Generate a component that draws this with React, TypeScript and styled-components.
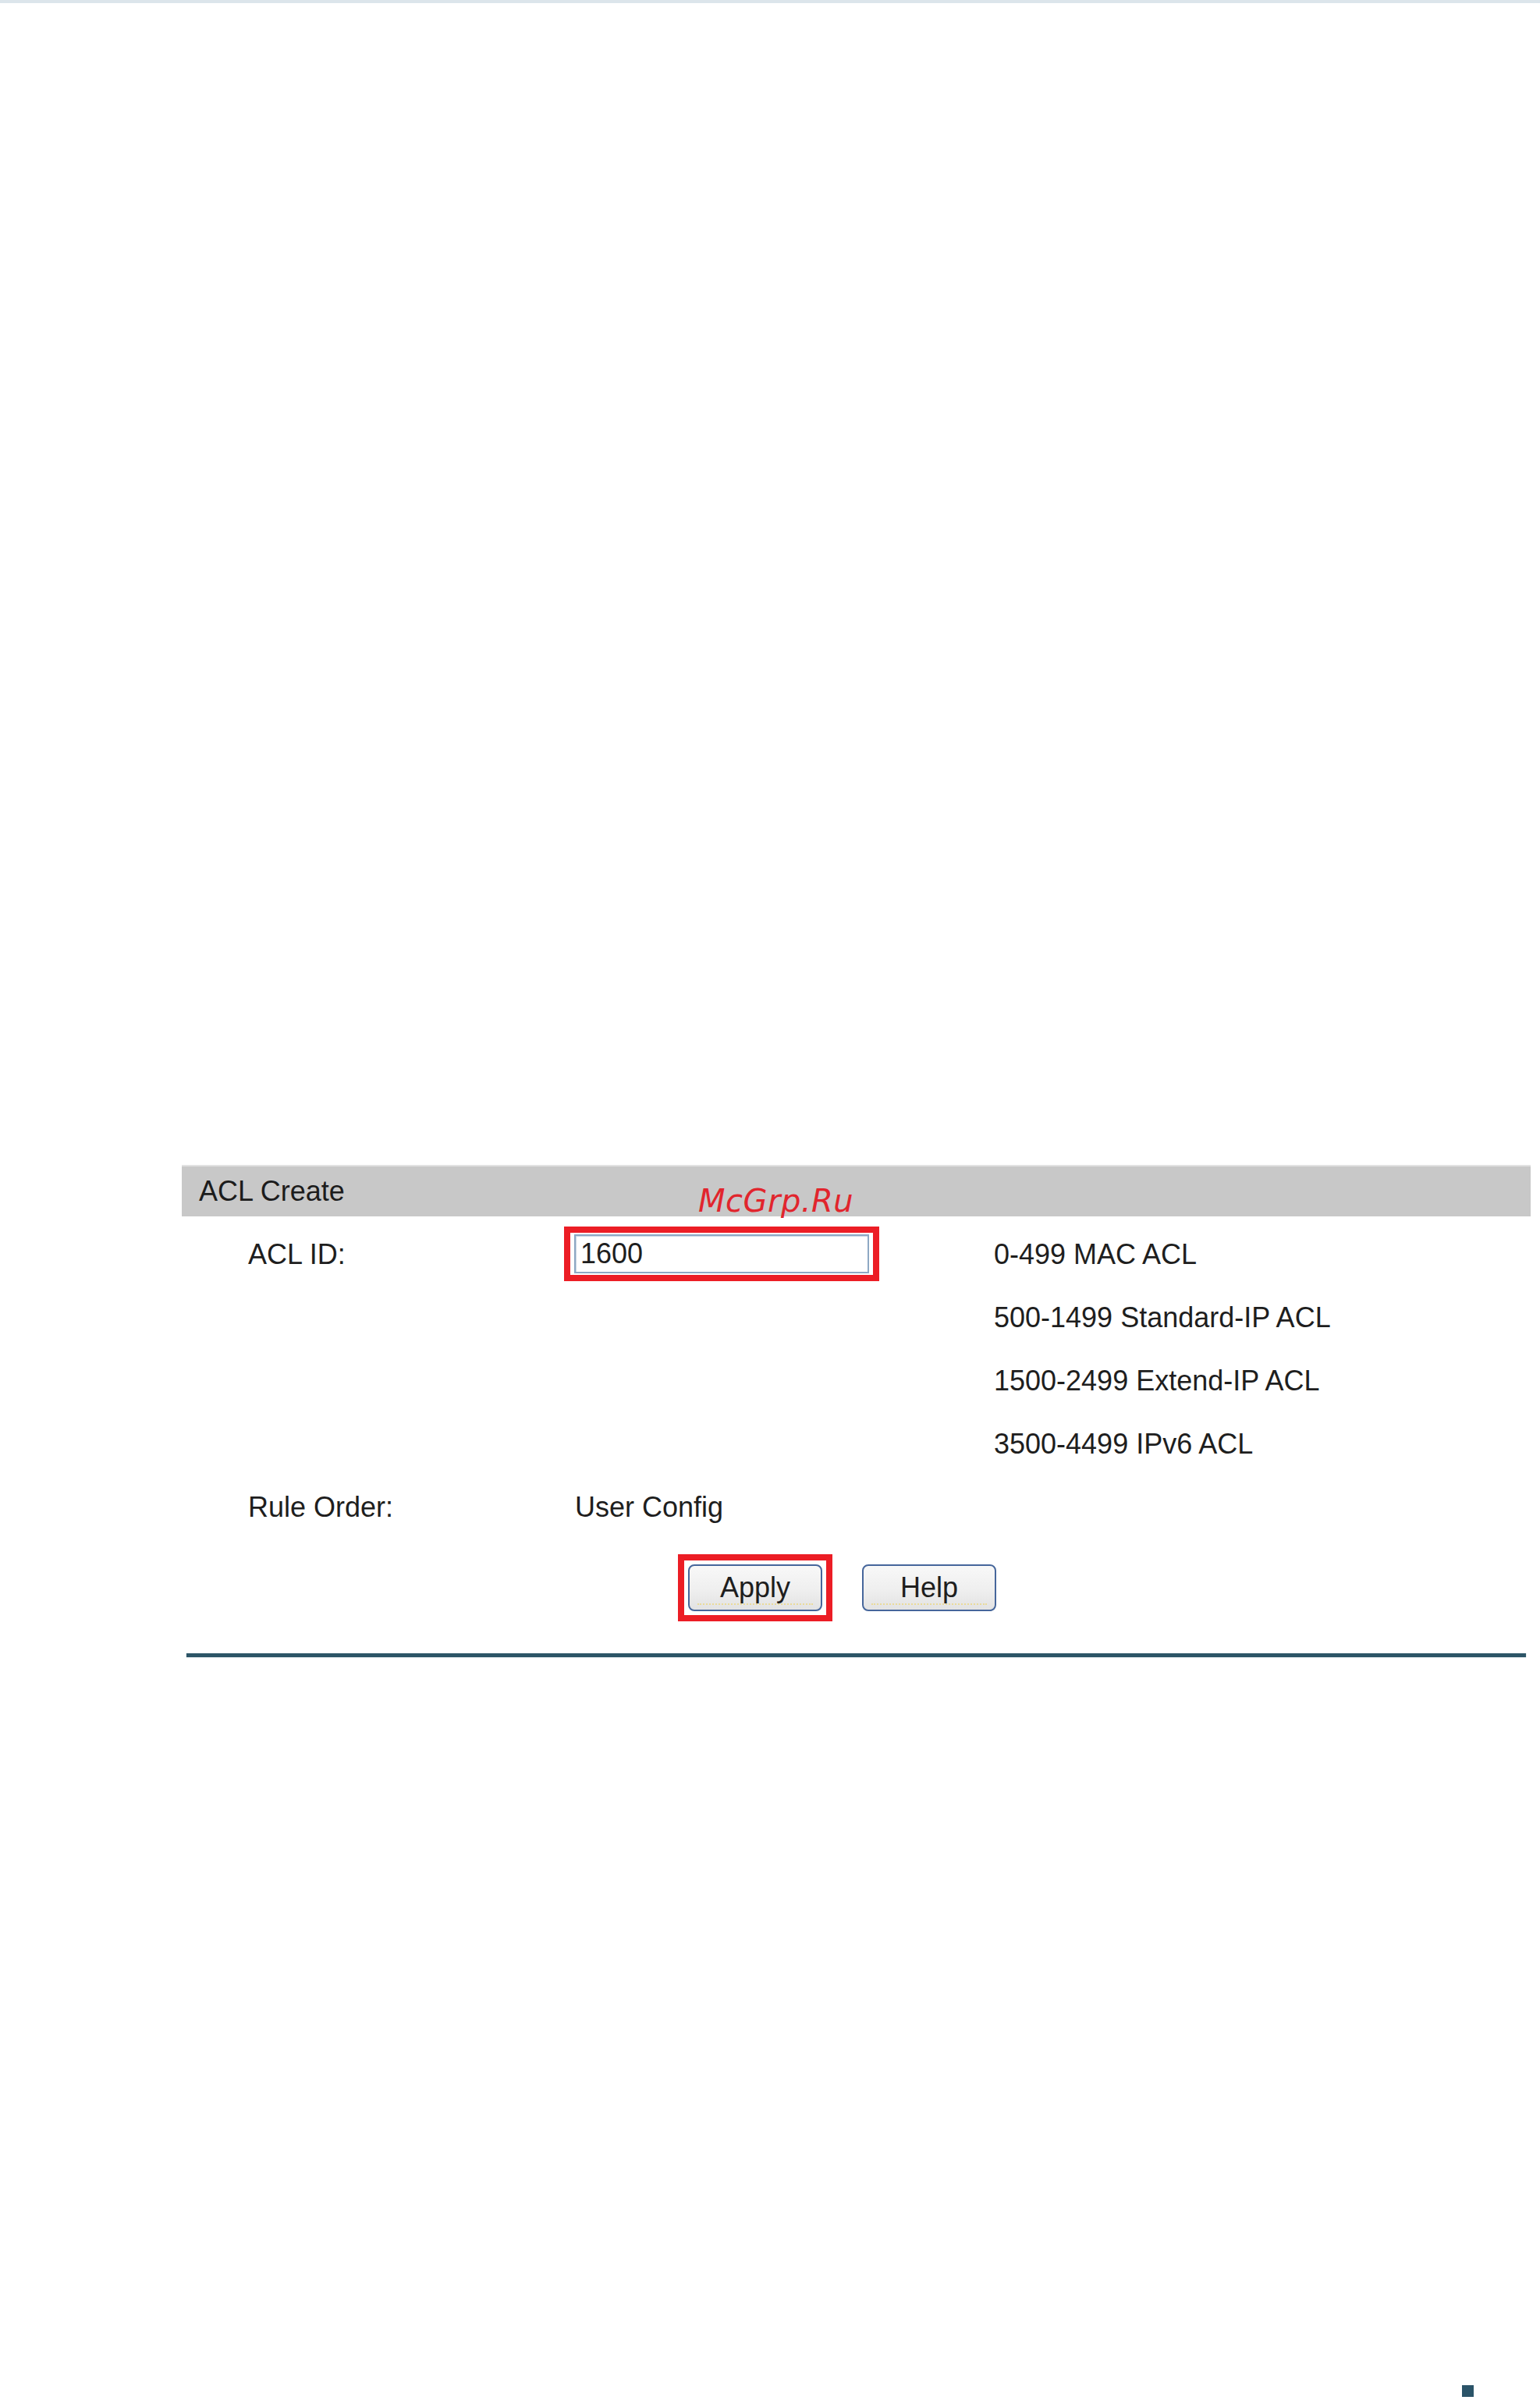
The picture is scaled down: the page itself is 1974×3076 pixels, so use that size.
import React from "react";
import styled, { createGlobalStyle } from "styled-components";

const Global = createGlobalStyle`
  html, body { margin: 0; padding: 0; background: #ffffff; }
  body { font-family: "Liberation Sans", Arial, sans-serif; color: #1e1e1e; }
  * { box-sizing: border-box; }
`;

const Page = styled.div`
  min-height: 3076px;
  display: flex;
  flex-direction: column;
`;

const TopStrip = styled.div`
  height: 4px;
  background: #dce5eb;
`;

const Main = styled.main`
  padding: 1489px 12px 0 233px;
`;

const Panel = styled.section`
  width: 1729px;
  position: relative;
`;

const Header = styled.div`
  height: 66px;
  background: #c8c8c8;
  border-top: 2px solid #e2e2e2;
  display: flex;
  align-items: center;
  padding-left: 22px;
  font-size: 36px;
  color: #1c1c1c;
`;

const Watermark = styled.span`
  position: absolute;
  left: 662px;
  top: 26px;
  font-family: "DejaVu Sans", sans-serif;
  font-style: italic;
  font-size: 40px;
  line-height: 40px;
  color: #e1252d;
  letter-spacing: 0.5px;
`;

const Grid = styled.div`
  display: grid;
  grid-template-columns: 405px 551px 1fr;
  grid-auto-rows: 81px;
  align-items: center;
  padding: 7px 0 0 85px;
  font-size: 36px;
`;

const Text = styled.span<{ $indent?: number }>`
  padding-left: ${(p) => p.$indent ?? 0}px;
  padding-top: 2px;
  white-space: nowrap;
`;

const Highlight = styled.div<{ $padX: number; $padY: number }>`
  display: inline-flex;
  border: 8px solid #ec1d25;
  padding: ${(p) => `${p.$padY}px ${p.$padX}px`};
  justify-self: start;
`;

const Input = styled.input`
  width: 378px;
  height: 50px;
  border: 2px solid #8ea8c4;
  box-shadow: inset 1px 1px 0 #c9d6e3;
  font-family: "Liberation Sans", Arial, sans-serif;
  font-size: 36px;
  color: #1e1e1e;
  padding: 0 6px;
  outline: none;
  background: #ffffff;
`;

const ButtonRow = styled.div`
  display: flex;
  align-items: center;
  gap: 38px;
  padding: 21px 0 0 636px;
`;

const Button = styled.button`
  position: relative;
  width: 172px;
  height: 60px;
  border: 2px solid #46669b;
  border-radius: 8px;
  background: linear-gradient(#f8f8f8 0%, #efefef 55%, #e2e2e2 100%);
  font-family: "Liberation Sans", Arial, sans-serif;
  font-size: 36px;
  color: #1e1e1e;
  padding: 0;
  cursor: pointer;
  &::after {
    content: "";
    position: absolute;
    left: 10px;
    right: 10px;
    bottom: 6px;
    border-bottom: 2px dotted #eadb9a;
  }
`;

const Rule = styled.hr`
  margin: 41px 6px 0 6px;
  border: none;
  height: 5px;
  background: #2d5567;
  box-shadow: 0 0 1px #8aa3ae;
`;

const Footer = styled.footer`
  margin-top: auto;
  display: flex;
  justify-content: flex-end;
  padding: 0 85px 4px 0;
`;

const Mark = styled.div`
  width: 15px;
  height: 15px;
  background: #2b5468;
`;

export default function App() {
  return (
    <Page>
      <Global />
      <TopStrip />
      <Main>
        <Panel>
          <Header>ACL Create</Header>
          <Watermark>McGrp.Ru</Watermark>
          <Grid>
            <Text>ACL ID:</Text>
            <Highlight $padX={5} $padY={2}>
              <Input defaultValue="1600" />
            </Highlight>
            <Text>0-499 MAC ACL</Text>

            <span />
            <span />
            <Text>500-1499 Standard-IP ACL</Text>

            <span />
            <span />
            <Text>1500-2499 Extend-IP ACL</Text>

            <span />
            <span />
            <Text>3500-4499 IPv6 ACL</Text>

            <Text>Rule Order:</Text>
            <Text $indent={14}>User Config</Text>
            <span />
          </Grid>
          <ButtonRow>
            <Highlight $padX={5} $padY={5}>
              <Button>Apply</Button>
            </Highlight>
            <Button>Help</Button>
          </ButtonRow>
          <Rule />
        </Panel>
      </Main>
      <Footer>
        <Mark />
      </Footer>
    </Page>
  );
}
